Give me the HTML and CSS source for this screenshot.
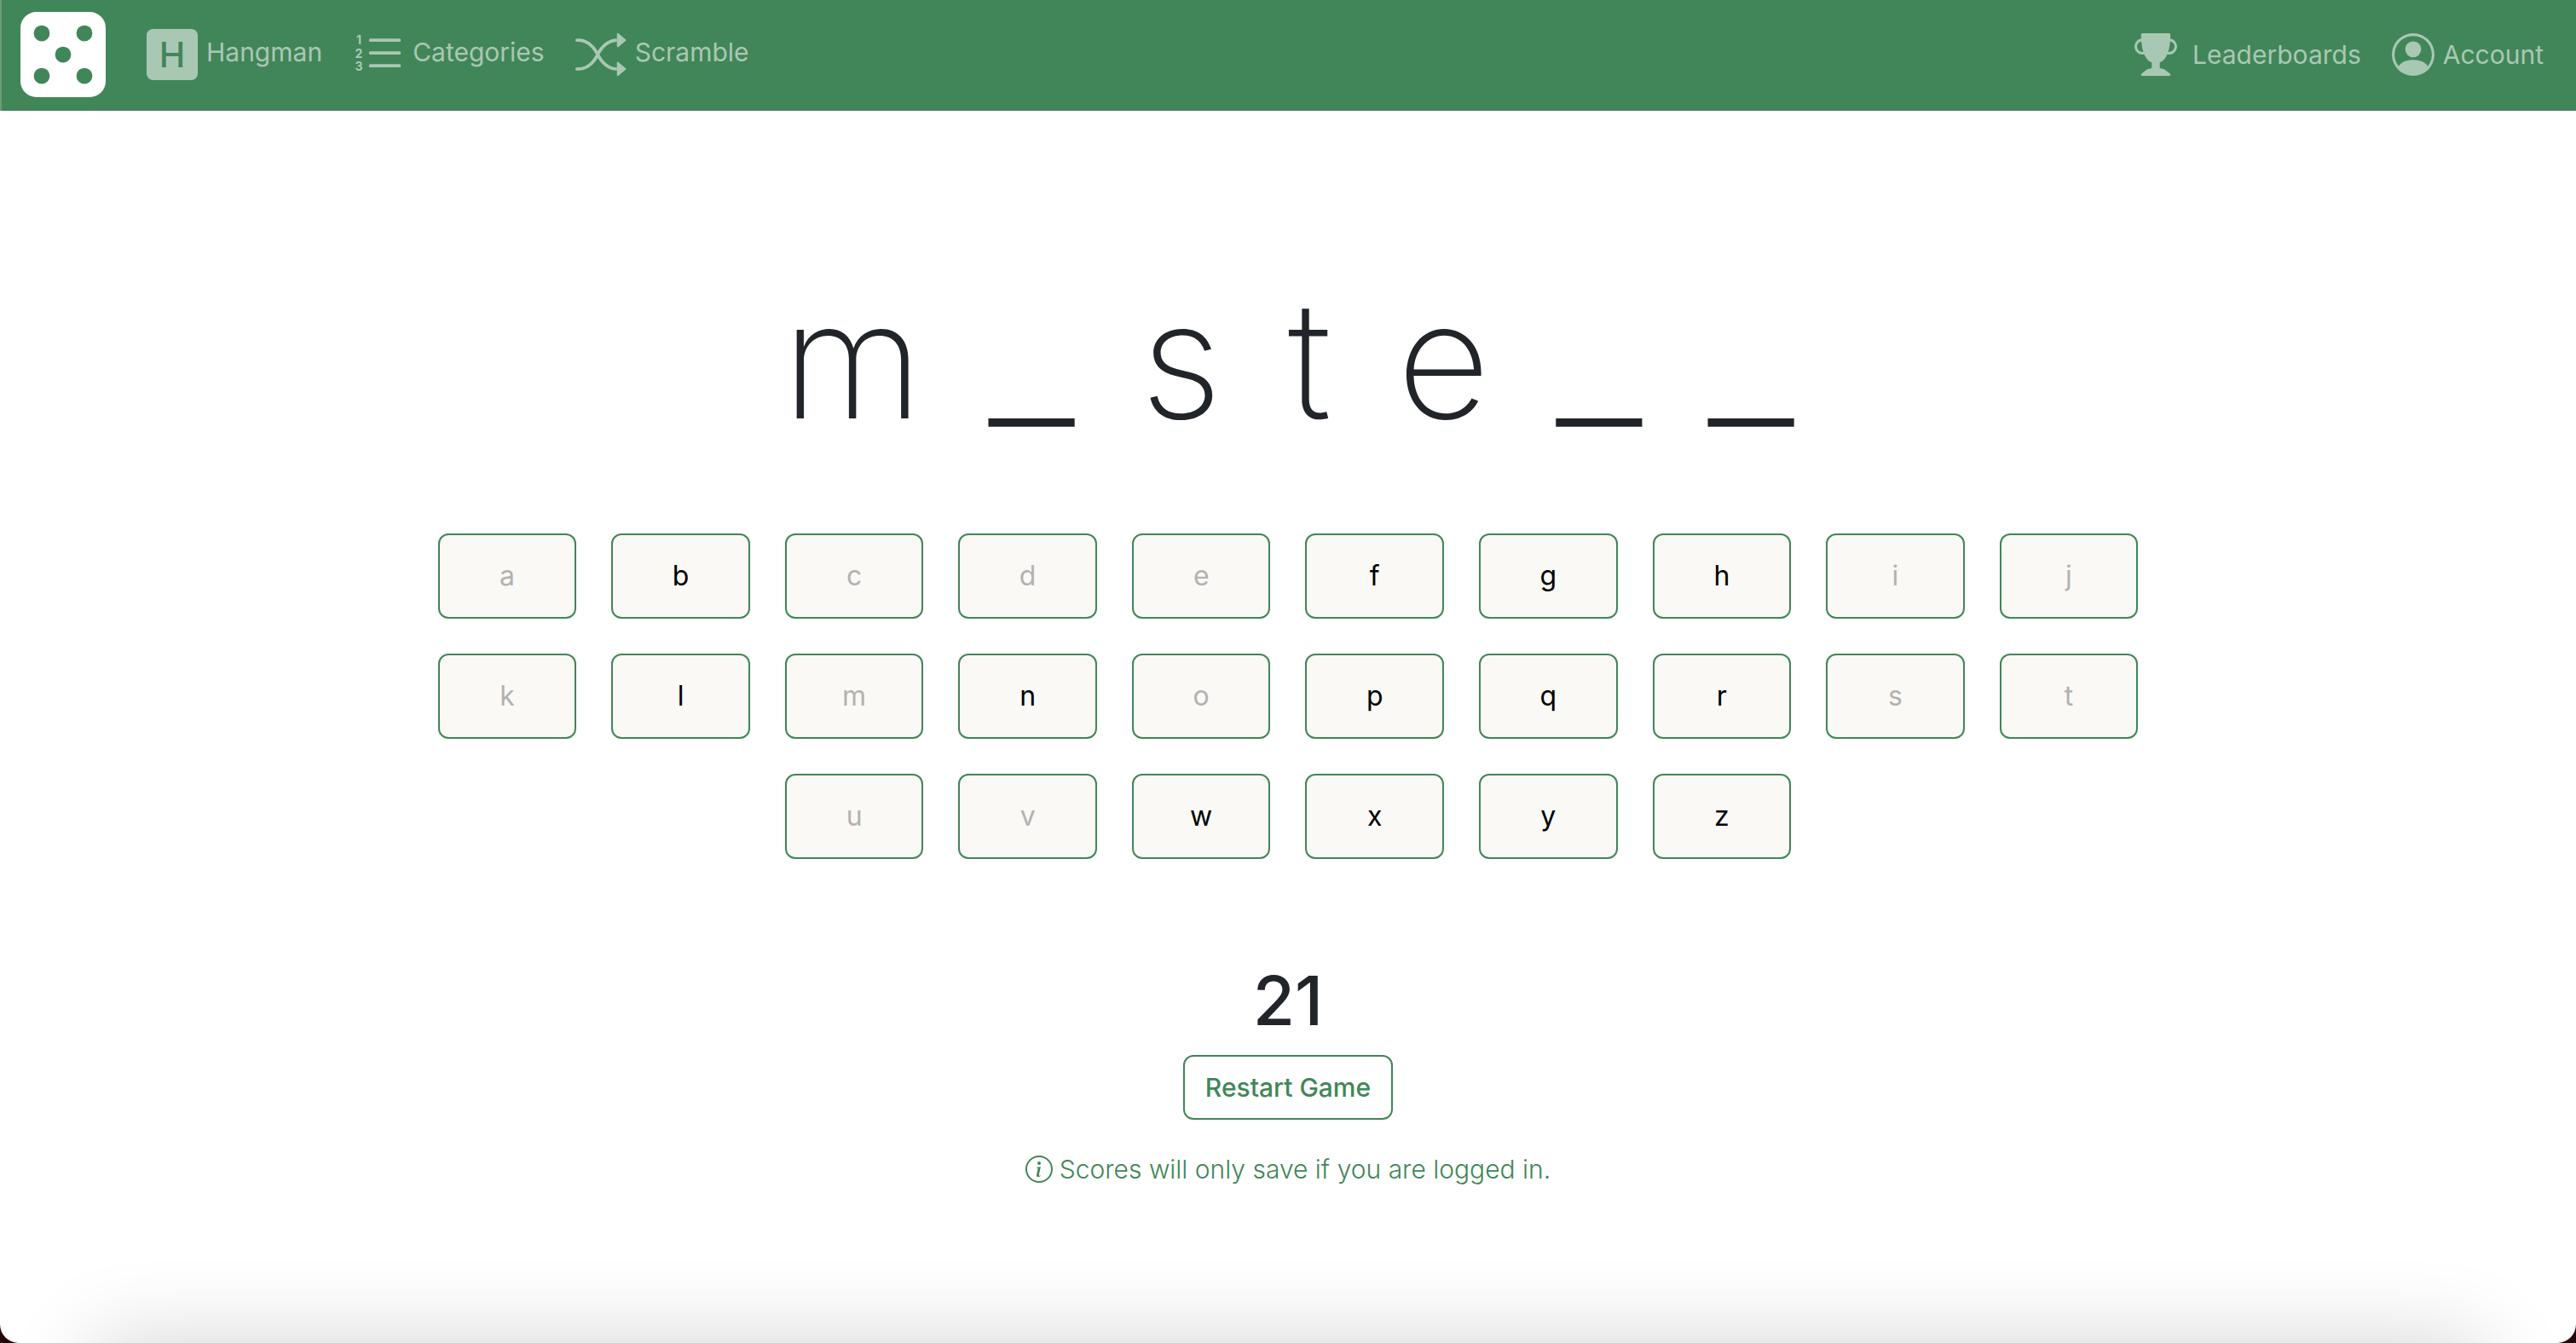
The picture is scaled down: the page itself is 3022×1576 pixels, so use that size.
FILE: index.html
```html
<!DOCTYPE html>
<html lang="en">
<head>
<meta charset="utf-8">
<meta name="viewport" content="width=device-width, initial-scale=1">
<title>Hangman</title>
<link rel="stylesheet" href="styles.css">
</head>
<body>
<div class="page">
  <header class="navbar">
    <a class="brand" href="#" aria-label="Home">
      <svg class="brand-icon" viewBox="0 0 16 16" fill="currentColor" aria-hidden="true"><path d="M3 0a3 3 0 0 0-3 3v10a3 3 0 0 0 3 3h10a3 3 0 0 0 3-3V3a3 3 0 0 0-3-3zm2.500 4a1.500 1.500 0 1 1-3 0 1.500 1.500 0 0 1 3 0m8 0a1.500 1.500 0 1 1-3 0 1.500 1.500 0 0 1 3 0M12 13.500a1.500 1.500 0 1 1 0-3 1.500 1.500 0 0 1 0 3M5.500 12a1.500 1.500 0 1 1-3 0 1.500 1.500 0 0 1 3 0M8 9.500a1.500 1.500 0 1 1 0-3 1.500 1.500 0 0 1 0 3"/></svg>
    </a>
    <nav class="games" aria-label="Games">
      <a class="nav-link" href="#">
        <svg class="game-icon" viewBox="0 0 60 60" aria-hidden="true"><rect width="60" height="60" rx="7.500" fill="currentColor"/><text class="icon-letter" x="30" y="45" text-anchor="middle">H</text></svg>
        <span class="label">Hangman</span>
      </a>
      <a class="nav-link" href="#">
        <svg class="game-icon" viewBox="0 0 60 60" fill="currentColor" aria-hidden="true"><path d="M20.600 11.250h33.800a1.875 1.875 0 0 1 0 3.750H20.600a1.875 1.875 0 0 1 0-3.750m0 15h33.800a1.875 1.875 0 0 1 0 3.750H20.600a1.875 1.875 0 0 1 0-3.750m0 15h33.800a1.875 1.875 0 0 1 0 3.750H20.600a1.875 1.875 0 0 1 0-3.750"/><g class="icon-digits" text-anchor="middle"><text x="7" y="18">1</text><text x="7" y="34">2</text><text x="7" y="49">3</text></g></svg>
        <span class="label">Categories</span>
      </a>
      <a class="nav-link" href="#">
        <svg class="game-icon" viewBox="0 0 16 16" fill="currentColor" aria-hidden="true"><path d="M0 3.500A.5.5 0 0 1 .5 3H1c2.202 0 3.827 1.240 4.874 2.418.49.552.865 1.102 1.126 1.532.26-.43.636-.98 1.126-1.532C9.173 4.240 10.798 3 13 3v1c-1.798 0-3.173 1.010-4.126 2.082A9.600 9.600 0 0 0 7.556 8a9.600 9.600 0 0 0 1.317 1.918C9.828 10.990 11.204 12 13 12v1c-2.202 0-3.827-1.240-4.874-2.418A10.600 10.600 0 0 1 7 9.050c-.26.43-.636.98-1.126 1.532C4.827 11.760 3.202 13 1 13H.5a.5.5 0 0 1 0-1H1c1.798 0 3.173-1.010 4.126-2.082A9.600 9.600 0 0 0 6.444 8a9.600 9.600 0 0 0-1.317-1.918C4.172 5.010 2.796 4 1 4H.5a.5.5 0 0 1-.5-.5"/><path d="M13 5.466V1.534a.25.25 0 0 1 .41-.192l2.360 1.966c.12.1.12.284 0 .384l-2.360 1.966a.25.25 0 0 1-.41-.192m0 9v-3.932a.25.25 0 0 1 .41-.192l2.360 1.966c.12.1.12.284 0 .384l-2.360 1.966a.25.25 0 0 1-.41-.192"/></svg>
        <span class="label">Scramble</span>
      </a>
    </nav>
    <nav class="user" aria-label="User">
      <a class="nav-link nav-link-wide" href="#">
        <svg class="user-icon" viewBox="0 0 16 16" fill="currentColor" aria-hidden="true"><path d="M2.500.5A.5.5 0 0 1 3 0h10a.5.5 0 0 1 .5.5q0 .807-.034 1.536a3 3 0 1 1-1.133 5.890c-.79 1.865-1.878 2.777-2.833 3.011v2.173l1.425.356c.194.048.377.135.537.255L13.300 15.100a.5.5 0 0 1-.3.9H3a.5.5 0 0 1-.3-.9l1.838-1.379c.16-.12.343-.207.537-.255L6.500 13.110v-2.173c-.955-.234-2.043-1.146-2.833-3.012a3 3 0 1 1-1.132-5.890A33 33 0 0 1 2.500.5m.099 2.540a2 2 0 0 0 .72 3.935c-.333-1.050-.588-2.346-.72-3.935m10.083 3.935a2 2 0 0 0 .72-3.935c-.133 1.590-.388 2.885-.72 3.935"/></svg>
        <span>Leaderboards</span>
      </a>
      <a class="nav-link" href="#">
        <svg class="user-icon" viewBox="0 0 16 16" fill="currentColor" aria-hidden="true"><path d="M11 6a3 3 0 1 1-6 0 3 3 0 0 1 6 0"/><path fill-rule="evenodd" d="M0 8a8 8 0 1 1 16 0A8 8 0 0 1 0 8m8-7a7 7 0 0 0-5.468 11.370C3.242 11.226 4.805 10 8 10s4.757 1.225 5.468 2.370A7 7 0 0 0 8 1"/></svg>
        <span>Account</span>
      </a>
    </nav>
  </header>

  <main class="game">
    <h1 class="word"><span>m</span><span class="blank">_</span><span>s</span><span>t</span><span>e</span><span class="blank">_</span><span class="blank">_</span></h1>

    <div class="keyboard">
      <button class="key" type="button" disabled>a</button>
      <button class="key" type="button">b</button>
      <button class="key" type="button" disabled>c</button>
      <button class="key" type="button" disabled>d</button>
      <button class="key" type="button" disabled>e</button>
      <button class="key" type="button">f</button>
      <button class="key" type="button">g</button>
      <button class="key" type="button">h</button>
      <button class="key" type="button" disabled>i</button>
      <button class="key" type="button" disabled>j</button>
      <button class="key" type="button" disabled>k</button>
      <button class="key" type="button">l</button>
      <button class="key" type="button" disabled>m</button>
      <button class="key" type="button">n</button>
      <button class="key" type="button" disabled>o</button>
      <button class="key" type="button">p</button>
      <button class="key" type="button">q</button>
      <button class="key" type="button">r</button>
      <button class="key" type="button" disabled>s</button>
      <button class="key" type="button" disabled>t</button>
      <button class="key key-last-row" type="button" disabled>u</button>
      <button class="key" type="button" disabled>v</button>
      <button class="key" type="button">w</button>
      <button class="key" type="button">x</button>
      <button class="key" type="button">y</button>
      <button class="key" type="button">z</button>
    </div>

    <p class="score">21</p>
    <button class="restart" type="button">Restart Game</button>
    <p class="note">
      <svg class="note-icon" viewBox="0 0 16 16" fill="currentColor" aria-hidden="true"><path d="M8 15A7 7 0 1 1 8 1a7 7 0 0 1 0 14m0 1A8 8 0 1 0 8 0a8 8 0 0 0 0 16"/><path d="m8.930 6.588-2.290.287-.082.38.45.083c.294.07.352.176.288.469l-.738 3.468c-.194.897.105 1.319.808 1.319.545 0 1.178-.252 1.465-.598l.088-.416c-.2.176-.492.246-.686.246-.275 0-.375-.193-.304-.533zM9 4.500a1 1 0 1 1-2 0 1 1 0 0 1 2 0"/></svg>
      <span>Scores will only save if you are logged in.</span>
    </p>
  </main>
</div>
</body>
</html>
```
FILE: styles.css
```css
:root {
  --green: #418658;
  --ink: #212529;
  --key: #faf9f6;
}

* {
  box-sizing: border-box;
}

html {
  background: #24040a;
}

body {
  margin: 0;
  color: var(--ink);
  font-family: Inter, "Liberation Sans", sans-serif;
  font-size: 30px;
  line-height: 48px;
}

.page {
  position: relative;
  min-height: 100vh;
  overflow: hidden;
  background: #fff;
  border-radius: 0 0 22px 22px;
}

.page::after {
  content: "";
  position: absolute;
  top: 100%;
  left: 110px;
  right: 110px;
  height: 100px;
  box-shadow: 0 0 100px rgba(0, 0, 0, 0.18);
}

.navbar {
  display: flex;
  align-items: center;
  height: 130px;
  padding: 0 38px 2px 22px;
  background: var(--green);
  border-left: 2px solid #679e7a;
}

.brand {
  display: flex;
  color: #fff;
}

.brand-icon {
  width: 100px;
  height: 100px;
}

.games,
.user {
  display: flex;
  align-items: center;
  gap: 36px;
}

.games {
  margin-left: 48px;
}

.user {
  margin-left: auto;
}

.nav-link {
  display: flex;
  align-items: center;
  gap: 10px;
  color: #a9c8b4;
  text-decoration: none;
}

.nav-link-wide {
  gap: 18px;
}

.label {
  padding-bottom: 6px;
}

.game-icon {
  width: 60px;
  height: 60px;
}

.user-icon {
  width: 50px;
  height: 50px;
}

.icon-letter {
  fill: var(--green);
  font-size: 41px;
  font-weight: 500;
}

.icon-digits {
  font-size: 14px;
  font-weight: 700;
}

.game {
  display: flex;
  flex-direction: column;
  align-items: center;
}

.word {
  display: flex;
  align-items: baseline;
  gap: 77px;
  margin: 176px 0 0;
  font-size: 190px;
  font-weight: 200;
  line-height: 232px;
}

.blank {
  font-size: 230px;
  line-height: 200px;
}

.keyboard {
  display: grid;
  grid-template-columns: repeat(10, 1fr);
  gap: 41px;
  width: 66%;
  margin-top: 88px;
}

.key {
  height: 100px;
  padding: 0;
  color: #000;
  background: var(--key);
  border: 2px solid var(--green);
  border-radius: 12px;
  font: inherit;
  font-size: 32px;
}

.key:disabled {
  color: #b3b2b0;
}

.key-last-row {
  grid-column-start: 3;
}

.score {
  margin: 118px 0 16px;
  font-size: 80px;
  font-weight: 500;
  line-height: 96px;
}

.restart {
  height: 76px;
  padding: 0 24px;
  color: var(--green);
  background: transparent;
  border: 2px solid var(--green);
  border-radius: 12px;
  font: inherit;
  font-weight: 500;
}

.note {
  display: flex;
  align-items: center;
  gap: 8px;
  margin: 34px 0 0;
  color: var(--green);
  font-weight: 300;
}

.note-icon {
  width: 32px;
  height: 32px;
}
```
